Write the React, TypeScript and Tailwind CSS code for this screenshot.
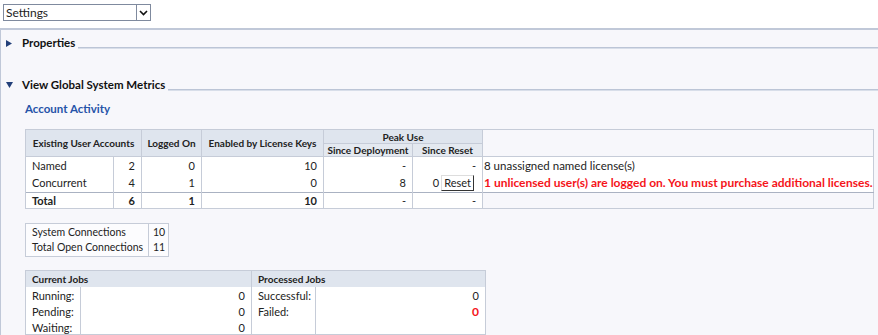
import React from "react";

const line = "border-[#c6ccd8]";

const SectionHeader = ({ title, open }: { title: string; open?: boolean }) => (
  <div className="flex items-end h-[16px] pl-[5px]">
    <div className="w-[16px] h-[16px] flex items-center">
      {open ? (
        <svg width="7" height="6" viewBox="0 0 7 6">
          <path d="M0 0 L7 0 L3.5 6 Z" fill="#23407a" />
        </svg>
      ) : (
        <svg width="6" height="7" viewBox="0 0 6 7">
          <path d="M0 0 L6 3.5 L0 7 Z" fill="#23407a" />
        </svg>
      )}
    </div>
    <span className="font-bold text-[11.5px] leading-[16px] text-[#111]">{title}</span>
    <div className="flex-1 ml-[3px] mb-[2px] h-[2px] border-t border-b border-t-[#bcc5d6] border-b-[#d8dee9]" />
  </div>
);

export default function App() {
  const td = `border-l border-r ${line} px-[6px] text-right`;
  return (
    <div className="w-[878px] h-[335px] overflow-hidden bg-white font-['Lato',sans-serif] text-[11px] text-[#222] whitespace-nowrap">
      {/* settings select */}
      <div className="h-[28px] pt-[4px] pl-[3px]">
        <div className="w-[148px] h-[17px] border border-[#7f8a9e] bg-white flex items-center">
          <span className="flex-1 pl-[2px] leading-[15px] text-[12px]">Settings</span>
          <div className="w-[14px] h-[15px] border-l border-[#7f8a9e] flex items-center justify-center">
            <svg width="9" height="6" viewBox="0 0 9 6">
              <path d="M1 1 L4.5 4.5 L8 1" stroke="#111" strokeWidth="1.6" fill="none" />
            </svg>
          </div>
        </div>
      </div>

      {/* panel */}
      <div className="h-[307px] bg-[#f7f7fb] border-t-2 border-l border-[#c0c8d8] pt-[5px]">
        <SectionHeader title="Properties" />
        <div className="mt-[26px]">
          <SectionHeader title="View Global System Metrics" open />
        </div>
        <div className="pl-[24px] mt-[8px] h-[16px] leading-[16px] font-bold text-[11.5px] text-[#2553a8]">
          Account Activity
        </div>

        {/* account table */}
        <div className="pl-[24px] mt-[12px]">
          <table className={`border-collapse table-fixed border ${line}`}>
            <colgroup>
              <col className="w-[88px]" />
              <col className="w-[28px]" />
              <col className="w-[60px]" />
              <col className="w-[122px]" />
              <col className="w-[89px]" />
              <col className="w-[70px]" />
              <col className="w-[390px]" />
            </colgroup>
            <thead className="text-[10px] font-bold text-[#222]">
              <tr className="h-[14px]">
                <th colSpan={2} rowSpan={2} className={`bg-[#dfe5ee] border ${line} leading-[12px] font-bold`}>
                  Existing User Accounts
                </th>
                <th rowSpan={2} className={`bg-[#dfe5ee] border ${line} leading-[12px]`}>
                  Logged On
                </th>
                <th rowSpan={2} className={`bg-[#dfe5ee] border ${line} leading-[12px]`}>
                  Enabled by License Keys
                </th>
                <th colSpan={2} className={`bg-[#dfe5ee] border ${line} leading-[12px]`}>
                  Peak Use
                </th>
                <th rowSpan={2} className={`bg-[#f7f7fb] border ${line}`} />
              </tr>
              <tr className="h-[13px]">
                <th className={`bg-[#e4e9f0] border ${line} leading-[12px]`}>Since Deployment</th>
                <th className={`bg-[#e4e9f0] border ${line} leading-[12px]`}>Since Reset</th>
              </tr>
            </thead>
            <tbody className="bg-white leading-[14px]">
              <tr className="h-[18px]">
                <td className={`border-l ${line} px-[6px]`}>Named</td>
                <td className={td}>2</td>
                <td className={td}>0</td>
                <td className={td}>10</td>
                <td className={td}>-</td>
                <td className={td}>-</td>
                <td className="pl-[1px] text-[11.5px]">8 unassigned named license(s)</td>
              </tr>
              <tr className="h-[18px]">
                <td className={`border-l ${line} px-[6px]`}>Concurrent</td>
                <td className={td}>4</td>
                <td className={td}>1</td>
                <td className={td}>0</td>
                <td className={td}>8</td>
                <td className={`border-l border-r ${line} pr-[8px]`}>
                  <div className="flex items-center justify-end gap-[2px]">
                    <span>0</span>
                    <button className="h-[16px] px-[2px] leading-[14px] bg-white border border-t-[#ddd] border-l-[#ddd] border-r-[#333] border-b-[#333] text-[11px]">
                      Reset
                    </button>
                  </div>
                </td>
                <td className="pl-[1px] font-bold text-[12px] text-[#f5141a]">
                  1 unlicensed user(s) are logged on. You must purchase additional licenses.
                </td>
              </tr>
              <tr className="h-[16px] border-t border-[#aab2c2] font-bold">
                <td className={`border-l ${line} px-[6px]`}>Total</td>
                <td className={td}>6</td>
                <td className={td}>1</td>
                <td className={td}>10</td>
                <td className={`${td} font-normal`}>-</td>
                <td className={`${td} font-normal`}>-</td>
                <td className="bg-[#f7f7fb]" />
              </tr>
            </tbody>
          </table>
        </div>

        {/* connections */}
        <div className="pl-[24px] mt-[14px]">
          <table className={`border-collapse border ${line} bg-[#fcfcfe] leading-[15px] text-[10.5px]`}>
            <tbody>
              <tr>
                <td className={`w-[123px] pl-[6px] pt-[1px] border-r ${line}`}>System Connections</td>
                <td className="w-[15px] pl-[4px] pr-[3px] pt-[1px]">10</td>
              </tr>
              <tr>
                <td className={`pl-[6px] pb-[1px] border-r ${line}`}>Total Open Connections</td>
                <td className="pl-[4px] pr-[3px] pb-[1px]">11</td>
              </tr>
            </tbody>
          </table>
        </div>

        {/* jobs */}
        <div className="pl-[24px] mt-[13px]">
          <div className={`w-[461px] border ${line} flex bg-white`}>
            {[
              {
                title: "Current Jobs",
                w: "w-[225px]",
                lw: "w-[55px]",
                rows: [
                  ["Running:", "0"],
                  ["Pending:", "0"],
                  ["Waiting:", "0"],
                ],
              },
              {
                title: "Processed Jobs",
                w: "flex-1 border-l",
                lw: "w-[64px]",
                rows: [
                  ["Successful:", "0"],
                  ["Failed:", "0"],
                ],
              },
            ].map((c) => (
              <div key={c.title} className={`${c.w} ${line} flex flex-col`}>
                <div className="h-[16px] bg-[#dfe5ee] pl-[6px] text-[10px] font-bold leading-[16px]">
                  {c.title}
                </div>
                <div className="flex h-[47px]">
                  <div className={`${c.lw} border-r ${line} pl-[6px] pt-[1px]`}>
                    {c.rows.map(([l]) => (
                      <div key={l} className="h-[16px] leading-[15px]">
                        {l}
                      </div>
                    ))}
                  </div>
                  <div className="flex-1 pr-[6px] pt-[1px] text-right">
                    {c.rows.map(([l, v]) => (
                      <div
                        key={l}
                        className={`h-[16px] leading-[15px] ${l === "Failed:" ? "font-bold text-[12px] text-[#f5141a]" : ""}`}
                      >
                        {v}
                      </div>
                    ))}
                  </div>
                </div>
              </div>
            ))}
          </div>
        </div>
      </div>
    </div>
  );
}
